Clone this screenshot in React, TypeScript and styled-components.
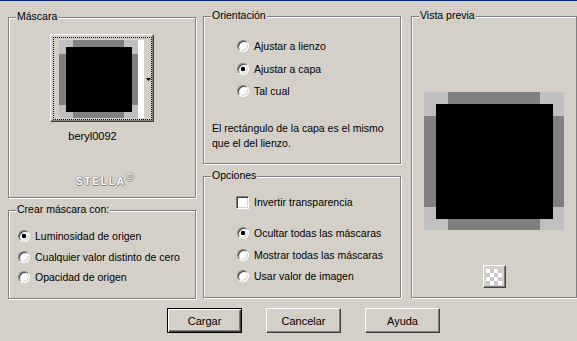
import React from "react";
import styled, { createGlobalStyle, css } from "styled-components";

const GlobalStyle = createGlobalStyle`
  html, body {
    margin: 0;
    padding: 0;
    background: #d4d0c8;
  }
  body {
    font-family: "Liberation Sans", Arial, sans-serif;
    font-size: 10.5px;
    color: #000;
  }
`;

const Window = styled.div`
  width: 577px;
  height: 341px;
  box-sizing: border-box;
  overflow: hidden;
  background: #d4d0c8;
  border-top: 1px solid #0a246a;
  display: flex;
  flex-direction: column;
`;

const Panels = styled.div`
  display: flex;
  align-items: flex-start;
  padding: 15px 0 0 8px;
`;

const Column = styled.div<{ $width: number; $offset?: number; $top?: number; $gap: number }>`
  width: ${(p) => p.$width}px;
  margin-left: ${(p) => p.$offset ?? 0}px;
  margin-top: ${(p) => p.$top ?? 0}px;
  display: flex;
  flex-direction: column;
  gap: ${(p) => p.$gap}px;
  flex: none;
`;

const Group = styled.section<{ $height: number }>`
  position: relative;
  box-sizing: border-box;
  height: ${(p) => p.$height}px;
  border: 1px solid #808080;
  box-shadow: 1px 1px 0 #fff, inset 1px 1px 0 #fff;
`;

const Caption = styled.span`
  position: absolute;
  top: -8px;
  left: 7px;
  padding: 0 1px;
  line-height: 13px;
  background: #d4d0c8;
  white-space: nowrap;
`;

/* ---------- Máscara ---------- */

const MaskBody = styled.div`
  display: flex;
  flex-direction: column;
  align-items: center;
  padding-top: 16px;
`;

const ThumbButton = styled.div`
  box-sizing: border-box;
  width: 104px;
  height: 88px;
  padding: 2px 1px 1px 2px;
  background: #d4d0c8;
  border: 1px solid;
  border-color: #fff #404040 #404040 #fff;
  box-shadow: inset -1px -1px 0 #808080;
`;

const FocusRing = styled.div`
  box-sizing: border-box;
  width: 99px;
  height: 83px;
  border: 1px dotted #000;
  padding: 2px 0 0 5px;
  display: flex;
  align-items: flex-start;
`;

const ImageWell = styled.div`
  display: flex;
  height: 78px;
  background: #fff;
  padding-right: 6px;
`;

const ArrowSlot = styled.div`
  flex: 1;
  height: 78px;
  display: flex;
  align-items: center;
  justify-content: center;
  padding-left: 1px;
`;

const FileName = styled.div`
  margin-top: 8px;
  margin-right: 19px;
  line-height: 13px;
  font-size: 11px;
`;

const Brand = styled.div`
  margin-top: 28px;
  margin-left: 5px;
  line-height: 13px;
  font-size: 10px;
  font-weight: bold;
  letter-spacing: 1.8px;
  color: #ffffff;
  text-shadow: 1px 0 0 #7c7c7c, 0 1px 0 #7c7c7c, -1px 0 0 #a8a8a8, 0 -1px 0 #b8b8b8;
  sup {
    font-size: 10px;
    font-weight: normal;
    letter-spacing: 0;
    vertical-align: 4px;
  }
`;

/* ---------- radio / checkbox lists ---------- */

const OptionList = styled.div<{ $top: number; $left: number; $row: number }>`
  display: flex;
  flex-direction: column;
  padding-top: ${(p) => p.$top}px;
  padding-left: ${(p) => p.$left}px;
  > label {
    height: ${(p) => p.$row}px;
  }
`;

const Option = styled.label`
  display: flex;
  align-items: center;
  white-space: nowrap;
`;

const sunken = css`
  box-sizing: border-box;
  flex: none;
  border: 1px solid;
  border-color: #808080 #fff #fff #808080;
  box-shadow: inset 1px 1px 0 #404040, inset -1px -1px 0 #d4d0c8;
`;

const RadioMark = styled.span<{ $checked?: boolean }>`
  ${sunken};
  width: 12px;
  height: 12px;
  border-radius: 50%;
  margin-right: 5px;
  background: ${(p) =>
    p.$checked ? "radial-gradient(circle, #000 0 2px, #fff 2.6px)" : "#fff"};
`;

const CheckMark = styled.span`
  ${sunken};
  width: 13px;
  height: 13px;
  margin-right: 5px;
  background: #fff;
`;

const Note = styled.p`
  margin: 18px 0 0 8px;
  line-height: 15px;
`;

/* ---------- preview ---------- */

const PreviewBody = styled.div`
  display: flex;
  flex-direction: column;
  align-items: center;
  padding-top: 75px;
`;

const ToolButton = styled.div`
  box-sizing: border-box;
  width: 23px;
  height: 23px;
  margin-top: 35px;
  display: flex;
  align-items: center;
  justify-content: center;
  background: #d4d0c8;
  border: 1px solid;
  border-color: #fff #404040 #404040 #fff;
  box-shadow: inset -1px -1px 0 #808080;
`;

/* ---------- buttons ---------- */

const ButtonRow = styled.div`
  display: flex;
  gap: 24px;
  margin-top: 9px;
  padding-left: 167px;
`;

const Button = styled.button<{ $default?: boolean }>`
  box-sizing: border-box;
  width: 75px;
  height: 25px;
  padding: 0;
  font: 11px "Liberation Sans", Arial, sans-serif;
  color: #000;
  background: #d4d0c8;
  border: 1px solid;
  border-color: #fff #404040 #404040 #fff;
  box-shadow: inset -1px -1px 0 #808080;
  ${(p) =>
    p.$default &&
    css`
      border: 1px solid #000;
      box-shadow: inset 1px 1px 0 #fff, inset -1px -1px 0 #404040,
        inset -2px -2px 0 #808080;
    `}
`;

const MaskArt: React.FC<{ width: number; height: number }> = ({ width, height }) => (
  <svg
    width={width}
    height={height}
    viewBox="0 0 140 138"
    preserveAspectRatio="none"
    shapeRendering="crispEdges"
  >
    <rect width="140" height="138" fill="#c0c0c0" />
    <rect x="24" width="92" height="138" fill="#808080" />
    <rect y="24" width="140" height="91" fill="#808080" />
    <rect x="12" y="12" width="117" height="115" fill="#000" />
  </svg>
);

const Checker: React.FC = () => {
  const cells = [];
  for (let r = 0; r < 4; r++)
    for (let c = 0; c < 4; c++)
      cells.push(
        <rect
          key={`${r}-${c}`}
          x={c * 4}
          y={r * 4}
          width="4"
          height="4"
          fill={(r + c) % 2 === 0 ? "#fff" : "#c8c8c8"}
        />
      );
  return (
    <svg width="16" height="16" viewBox="0 0 16 16" shapeRendering="crispEdges">
      {cells}
    </svg>
  );
};

const Radio: React.FC<{ label: string; checked?: boolean }> = ({ label, checked }) => (
  <Option>
    <RadioMark $checked={checked} />
    {label}
  </Option>
);

export default function App() {
  return (
    <>
      <GlobalStyle />
      <Window>
        <Panels>
          <Column $width={188} $top={1} $gap={12}>
            <Group $height={181}>
              <Caption>Máscara</Caption>
              <MaskBody>
                <ThumbButton>
                  <FocusRing>
                    <ImageWell>
                      <MaskArt width={79} height={78} />
                    </ImageWell>
                    <ArrowSlot>
                      <svg width="5" height="3" viewBox="0 0 5 3">
                        <path d="M0 0h5L2.5 3z" fill="#000" />
                      </svg>
                    </ArrowSlot>
                  </FocusRing>
                </ThumbButton>
                <FileName>beryl0092</FileName>
                <Brand>
                  STELLA<sup>©</sup>
                </Brand>
              </MaskBody>
            </Group>
            <Group $height={89}>
              <Caption>Crear máscara con:</Caption>
              <OptionList $top={15} $left={9} $row={20.5}>
                <Radio label="Luminosidad de origen" checked />
                <Radio label="Cualquier valor distinto de cero" />
                <Radio label="Opacidad de origen" />
              </OptionList>
            </Group>
          </Column>

          <Column $width={198} $offset={7} $gap={12}>
            <Group $height={148}>
              <Caption>Orientación</Caption>
              <OptionList $top={18} $left={33} $row={22.5}>
                <Radio label="Ajustar a lienzo" />
                <Radio label="Ajustar a capa" checked />
                <Radio label="Tal cual" />
              </OptionList>
              <Note>
                El rectángulo de la capa es el mismo
                <br />
                que el del lienzo.
              </Note>
            </Group>
            <Group $height={122}>
              <Caption>Opciones</Caption>
              <OptionList $top={14.5} $left={32} $row={21}>
                <Option>
                  <CheckMark />
                  Invertir transparencia
                </Option>
              </OptionList>
              <OptionList $top={10} $left={33} $row={21.5}>
                <Radio label="Ocultar todas las máscaras" checked />
                <Radio label="Mostrar todas las máscaras" />
                <Radio label="Usar valor de imagen" />
              </OptionList>
            </Group>
          </Column>

          <Column $width={166} $offset={10} $gap={0}>
            <Group $height={282}>
              <Caption>Vista previa</Caption>
              <PreviewBody>
                <MaskArt width={140} height={138} />
                <ToolButton>
                  <Checker />
                </ToolButton>
              </PreviewBody>
            </Group>
          </Column>
        </Panels>

        <ButtonRow>
          <Button $default>Cargar</Button>
          <Button>Cancelar</Button>
          <Button>Ayuda</Button>
        </ButtonRow>
      </Window>
    </>
  );
}
